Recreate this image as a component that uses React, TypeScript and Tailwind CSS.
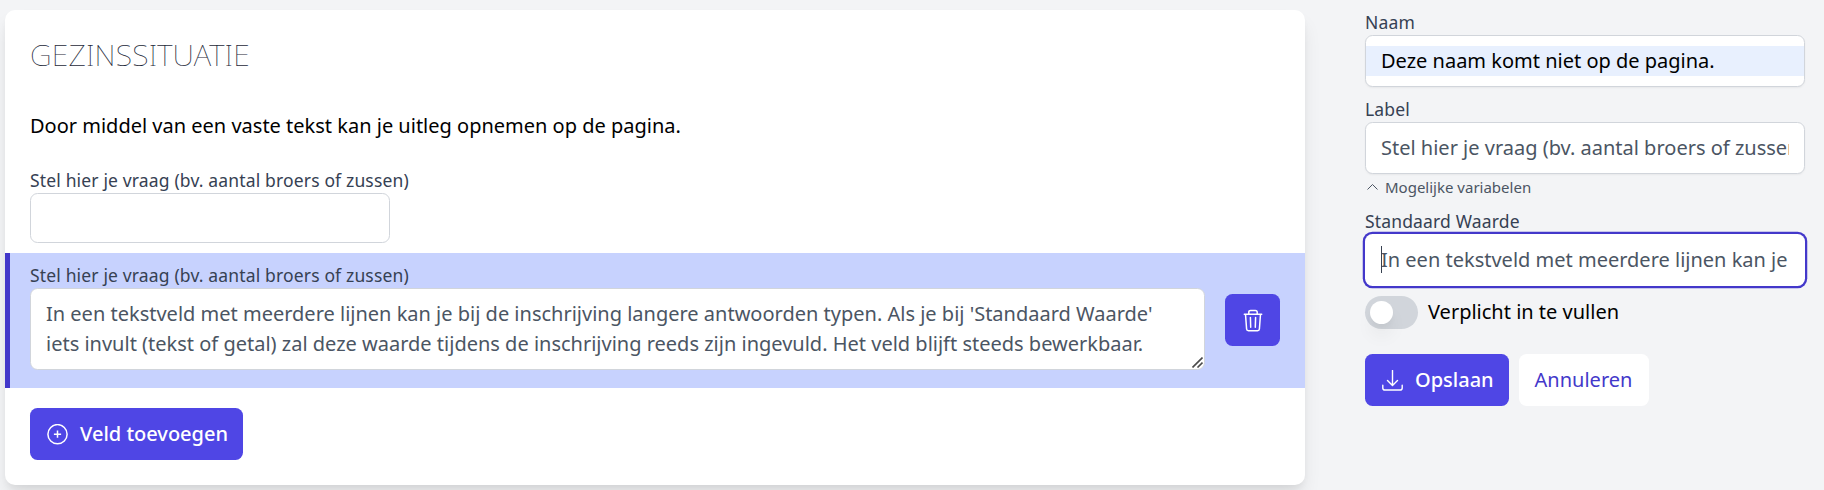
import type { ReactNode } from "react";

function Label({ children }: { children: ReactNode }) {
  return (
    <label className="block h-[25px] text-[17.5px] leading-[25px] tracking-[0.155px] text-gray-700">{children}</label>
  );
}

function Field({ children }: { children?: ReactNode }) {
  return (
    <div className="h-[52px] rounded-[7.5px] border border-[#d1d5db] bg-white px-[15px] py-[10px] shadow-[0_1px_2px_rgba(0,0,0,0.05)]">
      <div className="overflow-hidden whitespace-nowrap text-[#4b5563]">{children}</div>
    </div>
  );
}

function PlusCircleIcon() {
  return (
    <svg width="21" height="21" viewBox="0 0 21 21" fill="none" stroke="currentColor" strokeWidth="1.5">
      <circle cx="10.5" cy="10.2" r="9.6" />
      <path d="M10.5 6.6v7.200M6.900 10.200h7.200" />
    </svg>
  );
}

function TrashIcon() {
  return (
    <svg
      width="20"
      height="23"
      viewBox="0 0 20 23"
      fill="none"
      stroke="currentColor"
      strokeWidth="1.5"
      strokeLinecap="round"
    >
      <path d="M1.300 5.200h17.400M5.800 5V3.200C5.800 2 6.500 1.400 7.600 1.400h4.800c1.100 0 1.800.6 1.800 1.800V5M2.500 5.200l1.100 14.800c.1 1.100.8 1.700 1.800 1.700h9.200c1 0 1.700-.6 1.800-1.700L17.500 5.200M7.400 8.600l.3 9.600M12.600 8.600l-.3 9.600" />
    </svg>
  );
}

function DownloadIcon() {
  return (
    <svg width="21" height="21" viewBox="0 0 21 21" fill="none" stroke="currentColor" strokeWidth="1.4" strokeLinecap="round">
      <path d="M10.500.5v15M5.500 10.500l5 5 5-5M.8 15.300v2.600c0 1.200.9 2.100 2.100 2.100h15.200c1.200 0 2.100-.9 2.100-2.100v-2.600" />
    </svg>
  );
}

function FormPreview() {
  return (
    <section className="h-[475px] w-[1300px] shrink-0 rounded-[10px] bg-white pt-[25px] shadow-[0_12.5px_18.75px_-3.75px_rgba(0,0,0,0.1),0_5px_7.5px_-2.5px_rgba(0,0,0,0.05)]">
      <div className="px-[25px]">
        <h2 className="text-[30px] font-thin leading-[40px] tracking-[0.17px] text-gray-800">GEZINSSITUATIE</h2>
        <p className="mt-[36px]">Door middel van een vaste tekst kan je uitleg opnemen op de pagina.</p>
        <div className="mt-[27px]">
          <Label>Stel hier je vraag (bv. aantal broers of zussen)</Label>
          <div className="h-[50px] w-[360px] rounded-[7.5px] border border-[#d1d5db]" />
        </div>
      </div>
      <div className="mt-[10px] flex h-[135px] items-start gap-5 border-l-[5px] border-[#4338ca] bg-[#c7d2fe] pl-5 pr-[25px] pt-[10px]">
        <div className="grow">
          <Label>Stel hier je vraag (bv. aantal broers of zussen)</Label>
          <div className="relative h-[82px] rounded-[7.5px] border border-[#d1d5db] bg-white px-[15px] py-[10px] text-[#4b5563]">
            <p className="whitespace-nowrap">
              In een tekstveld met meerdere lijnen kan je bij de inschrijving langere antwoorden typen. Als je bij 'Standaard Waarde'
              <br />
              iets invult (tekst of getal) zal deze waarde tijdens de inschrijving reeds zijn ingevuld. Het veld blijft steeds bewerkbaar.
            </p>
            <svg
              className="absolute bottom-[1px] right-[1px] text-[#4b4b4b]"
              width="11"
              height="11"
              viewBox="0 0 11 11"
              fill="none"
              stroke="currentColor"
              strokeWidth="1.6"
            >
              <path d="M.5 10.500l10-10M5.500 10.500l5-5" />
            </svg>
          </div>
        </div>
        <button className="mt-[31px] flex h-[52px] w-[55px] items-center justify-center rounded-[7.5px] bg-[#4f46e5] text-white">
          <TrashIcon />
        </button>
      </div>
      <div className="px-[25px] pt-5">
        <button className="flex h-[52px] w-[213px] items-center gap-3 rounded-[7.5px] bg-[#4f46e5] pl-[17px] font-medium text-white">
          <PlusCircleIcon />
          Veld toevoegen
        </button>
      </div>
    </section>
  );
}

function FieldSettings() {
  return (
    <aside className="w-[440px] shrink-0">
      <Label>Naam</Label>
      <div className="flex h-[52px] items-center rounded-[7.5px] border border-[#d1d5db] bg-white shadow-[0_1px_2px_rgba(0,0,0,0.05)]">
        <div className="grow bg-[#e8f0fe] px-[15px]">Deze naam komt niet op de pagina.</div>
      </div>
      <div className="mt-[10px]">
        <Label>Label</Label>
        <Field>Stel hier je vraag (bv. aantal broers of zussen)</Field>
      </div>
      <div className="mt-[3px] flex h-5 items-center gap-[7px] pl-[2px] text-[15px] leading-5 text-[#4b5563]">
        <svg width="11" height="7" viewBox="0 0 11 7" fill="none" stroke="currentColor" strokeWidth="1">
          <path d="M.5 5.500l5-5 5 5" />
        </svg>
        Mogelijke variabelen
      </div>
      <div className="mt-[12px]">
        <Label>Standaard Waarde</Label>
        <div className="h-[52px] rounded-[7.5px] bg-white px-4 pt-[11px] text-[#4b5563] shadow-[0_0_0_2.25px_#4338ca]">
          <div className="relative whitespace-nowrap">
            <span className="absolute left-0 top-[1px] h-[27px] w-px bg-[#374151]" />
            In een tekstveld met meerdere lijnen kan je
          </div>
        </div>
      </div>
      <div className="mt-[10px] flex h-[33px] gap-[10px]">
        <div className="h-[33px] w-[53px] rounded-full bg-[#d1d5db] p-[5px]">
          <div className="size-[23px] rounded-full bg-white shadow-[0_12.5px_18.75px_-3.75px_rgba(0,0,0,0.1),0_5px_7.5px_-2.5px_rgba(0,0,0,0.05)]" />
        </div>
        <span className="pt-px">Verplicht in te vullen</span>
      </div>
      <div className="mt-[25px] flex gap-[10px]">
        <button className="flex h-[52px] w-[144px] items-center gap-3 rounded-[7.5px] bg-[#4f46e5] pl-[17px] font-medium text-white">
          <DownloadIcon />
          Opslaan
        </button>
        <button className="h-[52px] w-[130px] rounded-[7.5px] bg-white pr-px text-[#4338ca]">Annuleren</button>
      </div>
    </aside>
  );
}

export default function App() {
  return (
    <main className="flex h-[490px] w-[1824px] gap-[60px] overflow-hidden bg-[#f3f4f6] pl-[5px] pt-[10px] font-['Noto_Sans',sans-serif] text-[20px] leading-[30px] text-black">
      <FormPreview />
      <FieldSettings />
    </main>
  );
}
